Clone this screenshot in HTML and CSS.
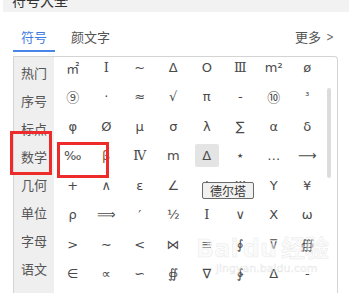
FILE: index.html
```html
<!DOCTYPE html>
<html lang="zh">
<head>
<meta charset="utf-8">
<title>符号大全</title>
<link rel="stylesheet" href="styles.css">
</head>
<body>
<div class="app">
  <div class="titlebar"><div class="title">符号大全</div></div>
  <div class="tabs">
    <div class="tab active">符号</div>
    <div class="tab">颜文字</div>
    <div class="more">更多 <span class="chev">&gt;</span></div>
  </div>
  <div class="panel">
    <div class="sidebar">
      <div class="cat">热门</div>
      <div class="cat">序号</div>
      <div class="cat">标点</div>
      <div class="cat">数学</div>
      <div class="cat">几何</div>
      <div class="cat">单位</div>
      <div class="cat">字母</div>
      <div class="cat">语文</div>
    </div>
    <div class="gridwrap">
      <div class="grid">
        <div class="c">㎡</div><div class="c serif">Ⅰ</div><div class="c">~</div><div class="c">Δ</div><div class="c">Ο</div><div class="c serif">Ⅲ</div><div class="c">m²</div><div class="c">ø</div>
        <div class="c cjk">⑨</div><div class="c">·</div><div class="c">≈</div><div class="c">√</div><div class="c">π</div><div class="c">-</div><div class="c cjk">⑩</div><div class="c sm">³</div>
        <div class="c">φ</div><div class="c">Ø</div><div class="c">μ</div><div class="c">σ</div><div class="c">λ</div><div class="c">∑</div><div class="c">α</div><div class="c">δ</div>
        <div class="c">‰</div><div class="c beta">β</div><div class="c serif">Ⅳ</div><div class="c">m</div><div class="c"><span class="sel">Δ</span></div><div class="c star">★</div><div class="c">…</div><div class="c">⟶</div>
        <div class="c">+</div><div class="c">∧</div><div class="c">ε</div><div class="c">∠</div><div class="c">Φ</div><div class="c">Ψ</div><div class="c">Υ</div><div class="c">¥</div>
        <div class="c">ρ</div><div class="c">⟹</div><div class="c">′</div><div class="c">½</div><div class="c serif">Ⅰ</div><div class="c">∨</div><div class="c">Χ</div><div class="c">ω</div>
        <div class="c">&gt;</div><div class="c">∼</div><div class="c">&lt;</div><div class="c">⋈</div><div class="c">≡</div><div class="c">∮</div><div class="c">⊽</div><div class="c">∰</div>
        <div class="c">∈</div><div class="c">∝</div><div class="c">∽</div><div class="c">∯</div><div class="c">∇</div><div class="c">∲</div><div class="c">Δ</div><div class="c">-</div>
      </div>
    </div>
    <div class="scroll"><div class="thumb"></div></div>
  </div>
  <div class="tooltip">德尔塔</div>
  <div class="mark mark-cat"></div>
  <div class="mark mark-sym"></div>
  <div class="watermark">
    <div class="wm-big">Bai<span class="wm-du">du</span>经验</div>
    <div class="wm-small">jingyan.baidu.com</div>
  </div>
</div>
</body>
</html>
```

FILE: styles.css
```css
* { box-sizing: border-box; }
html, body { margin: 0; padding: 0; background: #fff; }
body {
  font-family: "Noto Sans CJK SC", "Noto Sans", "DejaVu Sans", sans-serif;
  color: #555;
}
.app {
  position: relative;
  width: 349px;
  height: 293px;
  overflow: hidden;
  background: #fff;
}
.titlebar {
  margin-left: 3px;
  height: 12px;
  background: #f2f2f2;
  overflow: hidden;
  padding-left: 9px;
}
.title {
  margin-top: -8px;
  font-size: 14px;
  line-height: 16px;
  color: #333;
}
.tabs {
  display: flex;
  align-items: flex-end;
  height: 40px;
  margin-bottom: 4px;
  padding-left: 13px;
  padding-right: 14px;
}
.tab {
  font-size: 13px;
  line-height: 18px;
  padding-bottom: 4px;
  border-bottom: 2px solid transparent;
  color: #555;
}
.tab.active {
  width: 42px;
  text-align: center;
  color: #3f7be3;
  border-bottom-color: #4a86e8;
}
.tab + .tab { margin-left: 16px; }
.more {
  margin-left: auto;
  font-size: 13px;
  line-height: 18px;
  padding-bottom: 6px;
  color: #555;
  display: flex;
  align-items: center;
}
.chev {
  margin-left: 4px;
  font-family: "DejaVu Sans", sans-serif;
  font-size: 12px;
  color: #666;
  transform: scaleX(0.75);
}
.panel {
  margin-left: 13px;
  width: 325px;
  height: 237px;
  border: 1px solid #d4d4d4;
  border-bottom: none;
  border-radius: 0 4px 0 0;
  display: flex;
}
.sidebar {
  width: 40px;
  background: #efefef;
  padding-top: 1px;
}
.cat {
  height: 28px;
  display: flex;
  align-items: center;
  justify-content: center;
  font-size: 13px;
  color: #555;
}
.gridwrap {
  width: 270px;
  padding-left: 2px;
  overflow: hidden;
}
.grid {
  margin-top: -4.5px;
  display: grid;
  grid-template-columns: repeat(8, 33.5px);
  grid-auto-rows: 29.5px;
}
.c {
  display: flex;
  align-items: center;
  justify-content: center;
  font-family: "DejaVu Sans", "Noto Sans CJK SC", sans-serif;
  font-size: 13px;
  color: #4a4a4a;
}
.c.serif { font-family: "DejaVu Serif", "Liberation Serif", serif; font-size: 13px; }
.c.cjk { font-family: "Noto Sans CJK SC", sans-serif; font-size: 13px; }
.c.sm { font-size: 10px; }
.c.star { font-size: 7px; }
.c.beta { color: #a0502a; }
.sel {
  display: flex;
  align-items: center;
  justify-content: center;
  width: 24px;
  height: 23px;
  background: #e4e4e4;
  border-radius: 2px;
}
.scroll {
  width: 13px;
  padding-left: 3px;
  padding-top: 31px;
}
.thumb {
  width: 4px;
  height: 90px;
  background: #dcdcdc;
  border-radius: 2px;
}
.tooltip {
  position: absolute;
  left: 202px;
  top: 182px;
  width: 52px;
  height: 17px;
  border: 1px solid #6a6a6a;
  border-radius: 2px;
  background: #f1f1f1;
  font-size: 12px;
  line-height: 15px;
  text-align: center;
  color: #333;
}
.mark {
  position: absolute;
  border: 3px solid #ee2b2b;
}
.mark-cat { left: 10px; top: 131px; width: 42px; height: 44px; }
.mark-sym { left: 57px; top: 142px; width: 52px; height: 36px; }
.watermark {
  position: absolute;
  left: 196px;
  top: 236px;
  color: rgba(245, 245, 245, 0.5);
  -webkit-text-stroke: 0.5px rgba(170, 170, 170, 0.25);
  pointer-events: none;
}
.wm-big {
  font-family: "DejaVu Sans", "Noto Sans CJK SC", sans-serif;
  font-size: 24px;
  font-weight: bold;
  line-height: 26px;
}
.wm-du { margin: 0 4px; }
.wm-small {
  font-family: "DejaVu Sans", sans-serif;
  font-size: 11px;
  line-height: 13px;
  margin-left: 20px;
}
```
